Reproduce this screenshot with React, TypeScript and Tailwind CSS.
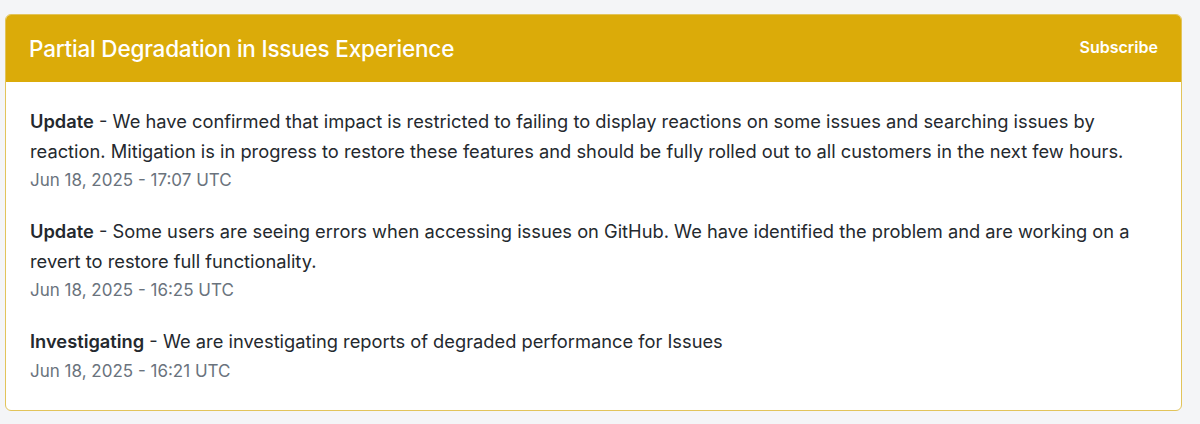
import React from 'react';

type Update = {
  status: string;
  body: string;
  time: string;
};

const updates: Update[] = [
  {
    status: 'Update',
    body: 'We have confirmed that impact is restricted to failing to display reactions on some issues and searching issues by reaction. Mitigation is in progress to restore these features and should be fully rolled out to all customers in the next few hours.',
    time: 'Jun 18, 2025 - 17:07 UTC',
  },
  {
    status: 'Update',
    body: 'Some users are seeing errors when accessing issues on GitHub. We have identified the problem and are working on a revert to restore full functionality.',
    time: 'Jun 18, 2025 - 16:25 UTC',
  },
  {
    status: 'Investigating',
    body: 'We are investigating reports of degraded performance for Issues',
    time: 'Jun 18, 2025 - 16:21 UTC',
  },
];

const App: React.FC = () => {
  return (
    <div className="min-h-[424px] bg-[#f4f5f7] pt-[14px] pl-[5px] pr-[18px] font-['Inter','Liberation_Sans',sans-serif]">
      {/* Incident card */}
      <div className="rounded-md border border-[#e2c45a] bg-white overflow-hidden">
        <div className="h-[67px] bg-[#dbab09] flex items-center justify-between pl-[23px] pr-[23px]">
          <h2 className="text-[22.5px] font-medium text-white tracking-[-0.2px]">Partial Degradation in Issues Experience</h2>
          <a href="#" className="-mt-[3px] text-[16px] font-semibold text-white">Subscribe</a>
        </div>
        <div className="pl-[24px] pr-[20px] pt-[25px] pb-[24px] space-y-[22px]">
          {updates.map((u, i) => (
            <div key={i}>
              <p className="text-[18.3px] leading-[29.5px] text-[#24292e]">
                <strong className="font-semibold">{u.status}</strong> - {u.body}
              </p>
              <small className="block text-[17px] leading-[29px] text-[#6a737d]">{u.time}</small>
            </div>
          ))}
        </div>
      </div>
    </div>
  );
};

export default App;
